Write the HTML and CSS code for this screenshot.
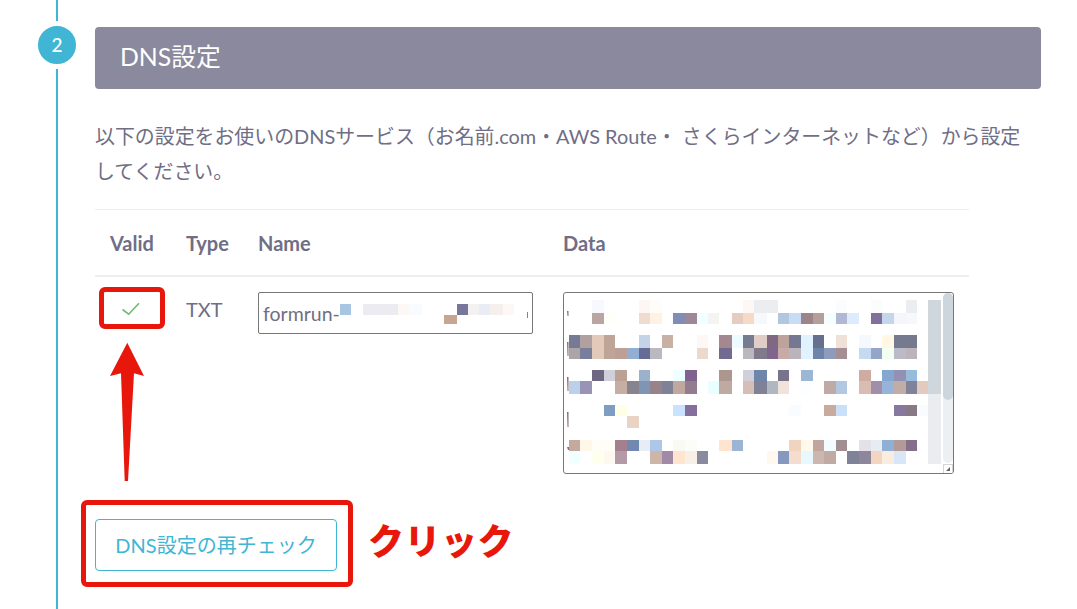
FILE: index.html
```html
<!DOCTYPE html>
<html lang="ja">
<head>
<meta charset="utf-8">
<title>DNS設定</title>
<link rel="stylesheet" href="styles.css">
</head>
<body>
<div class="page">
  <div class="rail"></div>
  <div class="badge">2</div>
  <main class="content">
    <h2 class="title">DNS設定</h2>
    <p class="lead">以下の設定をお使いのDNSサービス（お名前.com・AWS Route・ さくらインターネットなど）から設定<br>してください。</p>
    <table class="records">
      <colgroup><col class="c-valid"><col class="c-type"><col class="c-name"><col class="c-data"></colgroup>
      <thead>
        <tr><th>Valid</th><th>Type</th><th class="th-shift">Name</th><th class="th-shift">Data</th></tr>
      </thead>
      <tbody>
        <tr>
          <td class="valid-cell">
            <svg class="check" width="24" height="18" viewBox="0 0 24 18"><path d="M2.5 8.500 L8.700 13.200 L19 2.200" fill="none" stroke="#74b873" stroke-width="1.600"/></svg>
          </td>
          <td class="type-cell">TXT</td>
          <td>
            <div class="name-box">
              <span class="name-text">formrun-</span>
              <svg class="name-mosaic" width="275" height="42" viewBox="258 292 275 42">
                <rect x="340" y="304" width="11" height="11" fill="#a8c6e2"/>
                <rect x="363" y="304" width="35" height="11" fill="#ecebf1"/>
                <rect x="398" y="304" width="11" height="11" fill="#fbf8f5"/>
                <rect x="409" y="304" width="13" height="11" fill="#f8fbff"/>
                <rect x="457" y="304" width="11" height="11" fill="#77779c"/>
                <rect x="444" y="315" width="13" height="9" fill="#c6a592"/>
                <rect x="468" y="304" width="11" height="11" fill="#f3f2f0"/>
                <rect x="479" y="304" width="11" height="11" fill="#e9ecf2"/>
                <rect x="490" y="304" width="13" height="11" fill="#f5f0ee"/>
                <rect x="503" y="304" width="11" height="11" fill="#fcf8f7"/>
                <rect x="527" y="312" width="1" height="6" fill="#6f86ab"/>
              </svg>
            </div>
          </td>
          <td>
            <div class="data-box">
              <svg class="data-mosaic" width="391" height="182" viewBox="563 292 391 182">
                <g class="ra"><rect x="592" width="12" fill="#f8f9ff"/><rect x="639" width="11" fill="#fdf6f4"/><rect x="650" width="12" fill="#fffdf9"/><rect x="743" width="11" fill="#fef8f4"/><rect x="754" width="24" fill="#ecedf0"/><rect x="836" width="11" fill="#fbfcfe"/><rect x="871" width="11" fill="#fbfdfc"/><rect x="906" width="11" fill="#ecedf0"/></g>
                <g class="rb"><rect x="592" width="12" fill="#b9a6a2"/><rect x="604" width="11" fill="#fffffa"/><rect x="639" width="11" fill="#efdccf"/><rect x="650" width="12" fill="#fff2e2"/><rect x="673" width="12" fill="#808db5"/><rect x="685" width="12" fill="#9d8798"/><rect x="697" width="11" fill="#f0ffff"/><rect x="708" width="11" fill="#f4f4f0"/><rect x="732" width="11" fill="#e4ccc0"/><rect x="743" width="11" fill="#f6d9c6"/><rect x="754" width="13" fill="#f7f8fa"/><rect x="778" width="11" fill="#b0c6e1"/><rect x="789" width="12" fill="#c8dcf6"/><rect x="801" width="12" fill="#9d8486"/><rect x="813" width="11" fill="#b49f9c"/><rect x="824" width="12" fill="#f4feff"/><rect x="836" width="11" fill="#b0b8d4"/><rect x="847" width="12" fill="#ddecfd"/><rect x="871" width="11" fill="#82709c"/><rect x="882" width="12" fill="#c4d6ec"/><rect x="894" width="12" fill="#f5f6fb"/><rect x="906" width="11" fill="#f7f8fb"/></g>
                <g class="rc"><rect x="569" width="11" fill="#767b95"/><rect x="580" width="12" fill="#b0a1a0"/><rect x="592" width="12" fill="#e2c9ba"/><rect x="604" width="11" fill="#bea598"/><rect x="639" width="11" fill="#c5d3e9"/><rect x="662" width="11" fill="#c9b0a4"/><rect x="697" width="11" fill="#fdf8f5"/><rect x="719" width="13" fill="#a4888f"/><rect x="732" width="11" fill="#ecfbff"/><rect x="743" width="11" fill="#777b91"/><rect x="754" width="13" fill="#e0cdc5"/><rect x="767" width="11" fill="#806882"/><rect x="778" width="11" fill="#bca49c"/><rect x="789" width="12" fill="#747892"/><rect x="801" width="12" fill="#dff2fd"/><rect x="813" width="11" fill="#66708d"/><rect x="836" width="11" fill="#efe0d8"/><rect x="859" width="12" fill="#f5f9fd"/><rect x="882" width="12" fill="#fff8e4"/><rect x="894" width="23" fill="#767a8f"/></g>
                <g class="rd"><rect x="569" width="11" fill="#aca5a6"/><rect x="580" width="12" fill="#787e9c"/><rect x="592" width="12" fill="#e2c9ba"/><rect x="604" width="11" fill="#bea598"/><rect x="615" width="12" fill="#bd9f96"/><rect x="627" width="12" fill="#92aed3"/><rect x="639" width="11" fill="#656d96"/><rect x="650" width="12" fill="#b9b9bf"/><rect x="697" width="11" fill="#ecd9ce"/><rect x="719" width="13" fill="#716b8f"/><rect x="743" width="11" fill="#bab8bd"/><rect x="754" width="13" fill="#7f7a8c"/><rect x="767" width="11" fill="#7e668c"/><rect x="778" width="11" fill="#c8aba6"/><rect x="789" width="12" fill="#bab5bb"/><rect x="801" width="12" fill="#dff2fd"/><rect x="813" width="11" fill="#6d83a8"/><rect x="824" width="12" fill="#8d9bbd"/><rect x="836" width="11" fill="#a68f92"/><rect x="859" width="12" fill="#c5daf0"/><rect x="871" width="11" fill="#95a4c9"/><rect x="882" width="12" fill="#f2fff2"/><rect x="894" width="12" fill="#bbbbc8"/><rect x="906" width="11" fill="#bdb3bb"/></g>
                <g class="re"><rect x="592" width="12" fill="#6f6680"/><rect x="604" width="11" fill="#d0d0da"/><rect x="615" width="12" fill="#bca294"/><rect x="639" width="11" fill="#9cb1cc"/><rect x="673" width="12" fill="#edffff"/><rect x="685" width="12" fill="#7f628e"/><rect x="719" width="13" fill="#ad968d"/><rect x="743" width="11" fill="#d0d0dc"/><rect x="754" width="13" fill="#6f86ab"/><rect x="778" width="11" fill="#77748c"/><rect x="801" width="12" fill="#9cb6d6"/><rect x="859" width="12" fill="#cfaba2"/><rect x="882" width="12" fill="#83a7d0"/><rect x="894" width="12" fill="#9490b4"/><rect x="906" width="11" fill="#97bbdb"/></g>
                <g class="rf"><rect x="569" width="11" fill="#bbd1eb"/><rect x="580" width="12" fill="#9993b7"/><rect x="615" width="12" fill="#c6aea4"/><rect x="627" width="12" fill="#87838f"/><rect x="639" width="11" fill="#7f95b4"/><rect x="650" width="12" fill="#978389"/><rect x="662" width="11" fill="#7f8296"/><rect x="673" width="12" fill="#c1a89f"/><rect x="685" width="12" fill="#947c90"/><rect x="708" width="11" fill="#e8feff"/><rect x="719" width="13" fill="#bfaaa2"/><rect x="743" width="11" fill="#d6bdb5"/><rect x="754" width="13" fill="#7f8296"/><rect x="767" width="11" fill="#b0b6c2"/><rect x="778" width="11" fill="#f1e2da"/><rect x="801" width="12" fill="#fdfeff"/><rect x="824" width="12" fill="#bfaaa6"/><rect x="836" width="11" fill="#b2c8e0"/><rect x="859" width="12" fill="#d9bcb2"/><rect x="871" width="11" fill="#a08fab"/><rect x="882" width="12" fill="#97b3d8"/><rect x="894" width="12" fill="#c2aca6"/><rect x="906" width="11" fill="#7f8298"/><rect x="917" width="11" fill="#e2cbbe"/></g>
                <g class="rg"><rect x="604" width="11" fill="#7f9cc2"/><rect x="615" width="12" fill="#ffffe8"/><rect x="673" width="12" fill="#c8e2ff"/><rect x="685" width="12" fill="#866f9c"/><rect x="789" width="12" fill="#f8fcff"/><rect x="824" width="12" fill="#c9ab9e"/><rect x="836" width="11" fill="#c9e0f8"/><rect x="894" width="12" fill="#8778a0"/><rect x="906" width="11" fill="#877a86"/><rect x="917" width="11" fill="#f8fcff"/></g>
                <g class="rh"><rect x="627" width="12" fill="#e8d3c5"/></g>
                <g class="ri"><rect x="569" width="11" fill="#c4aa9e"/><rect x="580" width="12" fill="#fff8e8"/><rect x="592" width="23" fill="#fffdf8"/><rect x="615" width="12" fill="#a4808e"/><rect x="627" width="12" fill="#7189b0"/><rect x="639" width="11" fill="#e8edf5"/><rect x="650" width="12" fill="#adc7e8"/><rect x="673" width="12" fill="#fbf9f4"/><rect x="685" width="12" fill="#fbfdf8"/><rect x="719" width="13" fill="#ffe4d0"/><rect x="732" width="11" fill="#9cb5d4"/><rect x="789" width="12" fill="#f0d4c0"/><rect x="801" width="12" fill="#fff9ec"/><rect x="813" width="11" fill="#c0a49e"/><rect x="824" width="12" fill="#f2fbff"/><rect x="836" width="11" fill="#a08e92"/><rect x="859" width="12" fill="#e4e2e8"/><rect x="871" width="11" fill="#e6ebf4"/><rect x="882" width="12" fill="#8fafd6"/><rect x="894" width="12" fill="#b49a96"/><rect x="906" width="11" fill="#84708a"/></g>
                <g class="rj"><rect x="569" width="11" fill="#f0ffff"/><rect x="592" width="12" fill="#ffffee"/><rect x="604" width="11" fill="#fef9f0"/><rect x="615" width="12" fill="#b49aa6"/><rect x="650" width="12" fill="#cdb5a8"/><rect x="662" width="11" fill="#a08aa5"/><rect x="673" width="12" fill="#ffe4d0"/><rect x="685" width="12" fill="#f8efe6"/><rect x="697" width="11" fill="#888a9e"/><rect x="767" width="11" fill="#fff8ee"/><rect x="778" width="11" fill="#8599bf"/><rect x="789" width="12" fill="#f4dccf"/><rect x="801" width="12" fill="#e8f8ff"/><rect x="813" width="11" fill="#ccb6b0"/><rect x="824" width="12" fill="#c0aaa4"/><rect x="847" width="12" fill="#808298"/><rect x="859" width="12" fill="#8e869a"/><rect x="871" width="11" fill="#f2d6c2"/><rect x="882" width="12" fill="#f9ede0"/><rect x="894" width="12" fill="#d8e6f8"/></g>
                <path d="M567 311h1.500v5h-1zM567 342h1.500v14h-1zM567 377h1.500v14h-1zM567 412h1.500v15h-1zM567 447h2v3h-1z" fill="#8a6a70"/>
                <rect x="928" y="300" width="13" height="94" fill="#cfd7dd"/>
                <rect x="928" y="394" width="13" height="70" fill="#e9edf0"/>
                <rect x="943" y="293" width="10" height="170" rx="5" fill="#edf0f3"/>
                <rect x="943" y="293" width="10" height="107" rx="5" fill="#cdd6dc"/>
                <rect x="943.500" y="464.500" width="9" height="9" fill="#fff" stroke="#d4d4d4"/>
                <path d="M946 471l4-4v4z" fill="#666"/>
              </svg>
            </div>
          </td>
        </tr>
      </tbody>
    </table>
    <button class="recheck" type="button">DNS設定の再チェック</button>
  </main>

  <div class="mark mark-check"></div>
  <svg class="arrow" width="36" height="140" viewBox="0 0 36 140"><path d="M18.300 1.700 L35 35 L25 32.300 L19 140 L15.700 140 L12 32.300 L1 35 Z" fill="#e8170c"/></svg>
  <div class="mark mark-button"></div>
  <div class="click-label">クリック</div>
</div>
</body>
</html>
```

FILE: styles.css
```css
* { box-sizing: border-box; }
html, body { margin: 0; padding: 0; background: #fff; }
body {
  font-family: "Lato", "Noto Sans CJK JP", sans-serif;
  color: #6f6e85;
  width: 1077px;
  height: 609px;
  overflow: hidden;
}
.page {
  position: relative;
  display: flex;
  height: 609px;
  padding-left: 56px;
}
.rail {
  width: 2px;
  flex: none;
  background: #40b5d4;
}
.badge {
  position: absolute;
  left: 33px;
  top: 21px;
  width: 48px;
  height: 48px;
  border: 5px solid #fff;
  border-radius: 50%;
  background: #40b5d4;
  color: #fff;
  font-size: 19px;
  font-weight: 500;
  line-height: 37px;
  text-align: center;
}
.content {
  width: 946px;
  margin-left: 37px;
  padding-top: 27px;
}
.title {
  margin: 0;
  height: 62px;
  padding-left: 25px;
  background: #8a899e;
  border-radius: 4px;
  color: #fff;
  font-size: 24.800px;
  font-weight: 400;
  line-height: 60px;
}
.lead {
  margin: 30px 0 20px;
  font-size: 19.920px;
  line-height: 35px;
  white-space: nowrap;
}
.records {
  width: 874px;
  table-layout: fixed;
  border-collapse: collapse;
  border-top: 1px solid #eeeeee;
}
.c-valid { width: 76px; }
.c-type { width: 73px; }
.c-name { width: 305px; }
.c-data { width: 420px; }
.records th {
  height: 66px;
  padding: 1px 0 0 15px;
  border-bottom: 2px solid #eeeeee;
  font-size: 20px;
  font-weight: 700;
  text-align: left;
}
.records th.th-shift { padding-left: 14px; }
.records td {
  padding: 15px 0 0 15px;
  vertical-align: top;
  font-size: 20px;
}
.records td.valid-cell { padding-left: 25px; padding-top: 24px; }
.records td.type-cell { padding-top: 16px; line-height: 32px; }
.check { display: block; }
.name-box {
  position: relative;
  width: 275px;
  height: 42px;
  margin-left: -1px;
  border: 1px solid #777;
  border-radius: 2px;
  padding-left: 4px;
  font-size: 19.500px;
  line-height: 41px;
  overflow: hidden;
}
.name-mosaic {
  position: absolute;
  left: -1px;
  top: -1px;
}
.data-box {
  position: relative;
  width: 391px;
  height: 182px;
  margin-left: -1px;
  border: 1px solid #777;
  border-radius: 3px;
  overflow: hidden;
}
.data-mosaic {
  display: block;
  margin: -1px;
}
.ra rect { y: 300px; height: 13px; }
.rb rect { y: 313px; height: 11px; }
.rc rect { y: 335px; height: 13px; }
.rd rect { y: 348px; height: 11px; }
.re rect { y: 370px; height: 11px; }
.rf rect { y: 381px; height: 13px; }
.rg rect { y: 405px; height: 11px; }
.rh rect { y: 416px; height: 12px; }
.ri rect { y: 440px; height: 11px; }
.rj rect { y: 451px; height: 13px; }
.recheck {
  display: block;
  width: 242px;
  height: 52px;
  margin-top: 45px;
  padding: 0;
  background: #fff;
  border: 1px solid #40b5d4;
  border-radius: 4px;
  color: #40b5d4;
  font-family: inherit;
  font-size: 20px;
}
.mark {
  position: absolute;
  border: 5px solid #e8170c;
  border-radius: 6px;
}
.mark-check { left: 99px; top: 287px; width: 66px; height: 42px; }
.mark-button { left: 81px; top: 500px; width: 272px; height: 87px; }
.arrow { position: absolute; left: 109px; top: 341px; }
.click-label {
  position: absolute;
  left: 368px;
  top: 516px;
  color: #e8170c;
  font-size: 36px;
  font-weight: 900;
  line-height: 50px;
  letter-spacing: 0.500px;
  white-space: nowrap;
}
```
